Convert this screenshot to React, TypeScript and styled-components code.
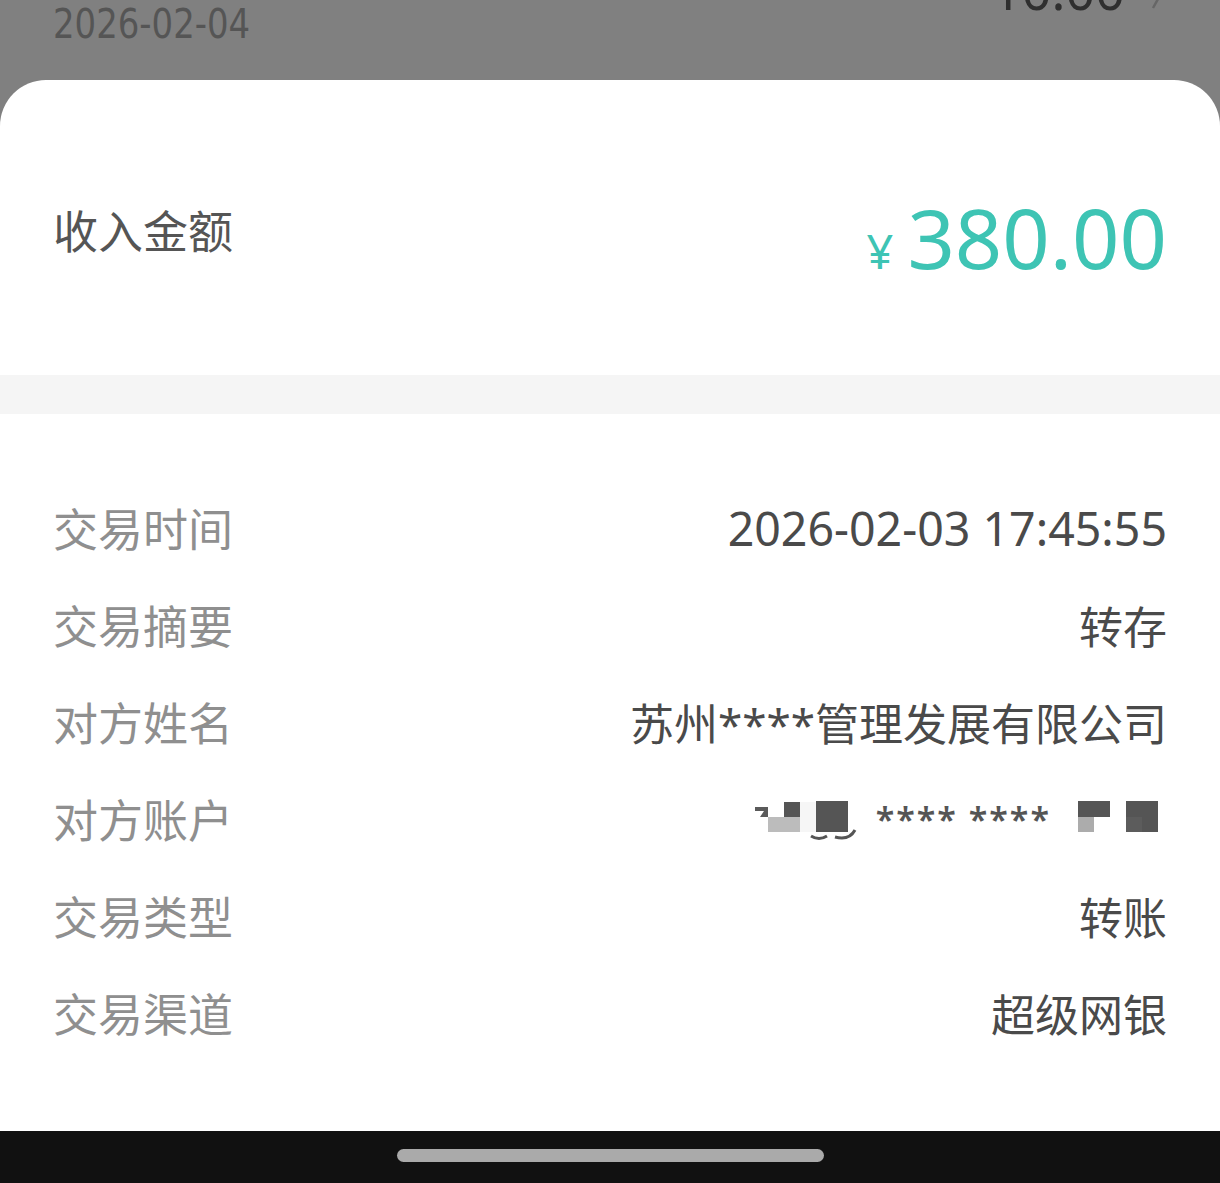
import styled, { createGlobalStyle } from 'styled-components';

interface DetailItem {
  label: string;
  value: string;
  latin?: boolean;
  masked?: boolean;
}

const GlobalStyle = createGlobalStyle`
  html, body {
    margin: 0;
    padding: 0;
    background: #808080;
  }
  body {
    font-family: "Noto Sans", "Noto Sans CJK SC", sans-serif;
  }
`;

const Screen = styled.div`
  display: flex;
  flex-direction: column;
  width: 1220px;
  height: 1183px;
  overflow: hidden;
  background: #808080;
`;

const Backdrop = styled.div`
  height: 80px;
  flex-shrink: 0;
  overflow: hidden;
`;

const BackdropRow = styled.div`
  display: flex;
  justify-content: space-between;
  align-items: flex-start;
  padding: 0 55px 0 53px;
  margin-top: -36px;
`;

const BackdropDate = styled.div`
  font-family: "DejaVu Sans Condensed", "Liberation Sans Narrow", sans-serif;
  font-size: 41px;
  color: #555;
  margin-top: 36px;
  transform: scaleX(0.92);
  transform-origin: left center;
`;

const BackdropAmount = styled.div`
  display: flex;
  align-items: flex-start;
  gap: 26px;
  font-size: 52px;
  color: #2f2f2f;
  line-height: 1;
`;

const Sheet = styled.div`
  flex: 1;
  display: flex;
  flex-direction: column;
  background: #fff;
  border-radius: 46px 46px 0 0;
  overflow: hidden;
`;

const AmountSection = styled.div`
  height: 295px;
  display: flex;
  align-items: center;
  justify-content: space-between;
  padding: 0 53px 0 53px;
  box-sizing: border-box;
`;

const AmountLabel = styled.div`
  font-family: "Noto Sans CJK SC", sans-serif;
  font-size: 45px;
  color: #555;
  margin-top: 4px;
`;

const AmountValue = styled.div`
  display: flex;
  align-items: baseline;
  gap: 14px;
  color: #3ec4b4;
  margin-top: 22px;
`;

const Currency = styled.span`
  font-size: 47px;
`;

const Digits = styled.span`
  font-size: 83px;
  line-height: 1;
`;

const Band = styled.div`
  height: 39px;
  background: #f5f5f5;
  flex-shrink: 0;
`;

const DetailList = styled.div`
  display: flex;
  flex-direction: column;
  padding: 65px 53px 0 53px;
  flex: 1;
`;

const DetailRow = styled.div`
  display: flex;
  justify-content: space-between;
  align-items: center;
  height: 97px;
`;

const DetailLabel = styled.div`
  font-family: "Noto Sans CJK SC", sans-serif;
  font-size: 45px;
  color: #8f8f8f;
`;

const DetailValue = styled.div<{ $latin?: boolean }>`
  font-family: "Noto Sans", "Noto Sans CJK SC", sans-serif;
  font-size: ${(p) => (p.$latin ? 46.5 : 44)}px;
  color: #4a4a4a;
`;

const Masked = styled.div`
  display: flex;
  align-items: center;
  color: #555;
  height: 44px;
`;

const Stars = styled.span`
  letter-spacing: 2px;
  margin: 0 27px 0 17px;
  font-family: "Noto Sans", sans-serif;
  font-weight: 600;
  font-size: 34px;
  line-height: 44px;
  white-space: pre;
`;

const Mosaic = styled.svg`
  display: block;
  flex-shrink: 0;
`;

const NavBar = styled.div`
  height: 52px;
  background: #111;
  display: flex;
  justify-content: center;
  align-items: center;
  flex-shrink: 0;
`;

const NavPill = styled.div`
  width: 427px;
  height: 13px;
  border-radius: 7px;
  background: #aaa;
  margin-top: -4px;
`;

const details: DetailItem[] = [
  { label: '交易时间', value: '2026-02-03 17:45:55', latin: true },
  { label: '交易摘要', value: '转存' },
  { label: '对方姓名', value: '苏州****管理发展有限公司' },
  { label: '对方账户', value: '', masked: true },
  { label: '交易类型', value: '转账' },
  { label: '交易渠道', value: '超级网银' },
];

function MaskedAccount() {
  return (
    <Masked>
      <Mosaic width="104" height="44" viewBox="0 0 104 44">
        <polygon points="0,10 13,10 13,20 5,20 9,14 0,14" fill="#5a5a5a" />
        <rect x="13" y="20" width="32" height="15" fill="#bcbcbc" />
        <rect x="29" y="5" width="16" height="15" fill="#555" />
        <rect x="45" y="5" width="16" height="30" fill="#f6f6f6" />
        <rect x="61" y="4" width="32" height="31" fill="#555" />
        <path d="M56 39 Q64 44 72 39" stroke="#555" strokeWidth="3" fill="none" />
        <path d="M80 40 Q94 44 100 33" stroke="#555" strokeWidth="3" fill="none" />
      </Mosaic>
      <Stars>**** ****</Stars>
      <Mosaic width="89" height="44" viewBox="0 0 89 44">
        <rect x="0" y="4" width="32" height="16" fill="#555" />
        <rect x="0" y="20" width="16" height="15" fill="#acacac" />
        <rect x="48" y="4" width="32" height="31" fill="#555" />
        <rect x="48" y="20" width="16" height="15" fill="#5c5c5c" />
      </Mosaic>
    </Masked>
  );
}

export default function App() {
  return (
    <>
      <GlobalStyle />
      <Screen>
        <Backdrop>
          <BackdropRow>
            <BackdropDate>2026-02-04</BackdropDate>
            <BackdropAmount>
              <span>10.00</span>
              <svg width="14" height="48" viewBox="0 0 14 48">
                <path d="M2 10 L12 26 L2 44" stroke="#666" strokeWidth="2.5" fill="none" />
              </svg>
            </BackdropAmount>
          </BackdropRow>
        </Backdrop>
        <Sheet>
          <AmountSection>
            <AmountLabel>收入金额</AmountLabel>
            <AmountValue>
              <Currency>¥</Currency>
              <Digits>380.00</Digits>
            </AmountValue>
          </AmountSection>
          <Band />
          <DetailList>
            {details.map((d) => (
              <DetailRow key={d.label}>
                <DetailLabel>{d.label}</DetailLabel>
                {d.masked ? <MaskedAccount /> : <DetailValue $latin={d.latin}>{d.value}</DetailValue>}
              </DetailRow>
            ))}
          </DetailList>
          <NavBar>
            <NavPill />
          </NavBar>
        </Sheet>
      </Screen>
    </>
  );
}
